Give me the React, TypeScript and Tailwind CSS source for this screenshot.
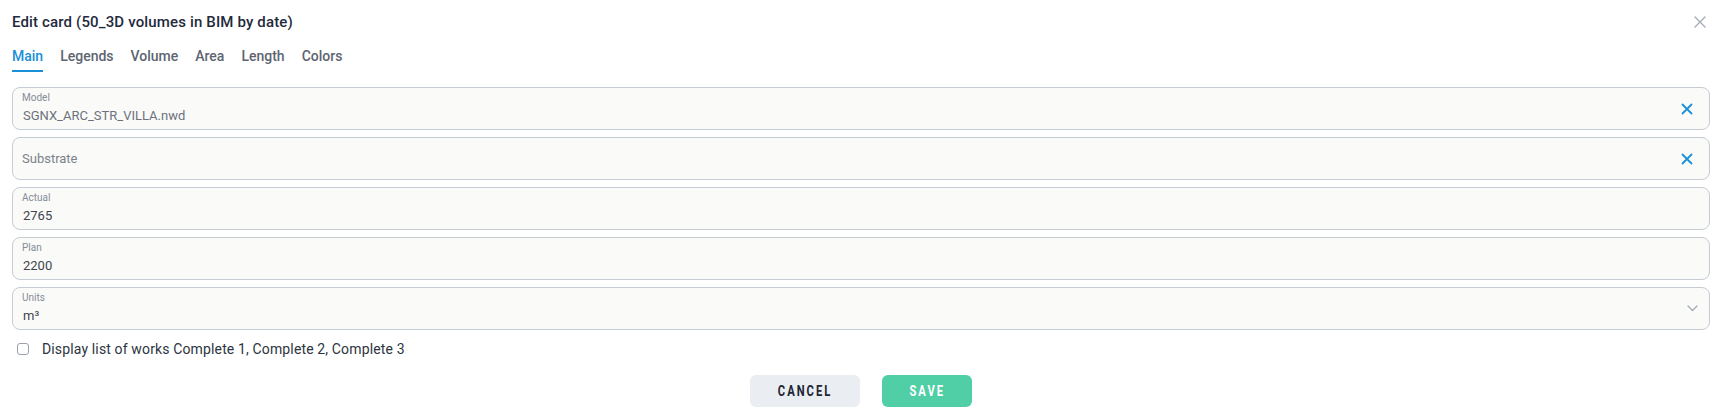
import React from 'react';

const tabs = ['Main', 'Legends', 'Volume', 'Area', 'Length', 'Colors'];

const ClearIcon: React.FC = () => (
  <svg width="12" height="12" viewBox="0 0 12 12" fill="none">
    <path d="M1.5 1.5L10.5 10.5M10.5 1.5L1.5 10.5" stroke="#1b8fd8" strokeWidth="1.8" strokeLinecap="round" />
  </svg>
);

interface FieldProps {
  label?: string;
  value?: string;
  placeholder?: string;
  valueClass?: string;
  right?: React.ReactNode;
}

const Field: React.FC<FieldProps> = ({ label, value, placeholder, valueClass, right }) => (
  <div className="flex h-[43px] items-center rounded-lg border border-[#c5ccd4] bg-[#fafaf9] pl-[9px]">
    <div className="flex min-w-0 flex-1 flex-col justify-center">
      {label ? (
        <>
          <span className="text-[10px] leading-[12px] text-[#858c96]">{label}</span>
          <span className={`mt-[3px] pl-[1px] text-[13px] leading-[18px] ${valueClass ?? 'text-[#3f454e]'}`}>{value}</span>
        </>
      ) : (
        <span className="text-[13px] leading-[18px] text-[#7c828c]">{placeholder}</span>
      )}
    </div>
    {right}
  </div>
);

export default function App() {
  return (
    <div className="h-[420px] w-full bg-white px-3 pt-[11px] font-['Roboto',sans-serif]">
      {/* header */}
      <div className="flex items-center justify-between">
        <h2 className="text-[15px] font-medium leading-[22px] tracking-[0.01em] text-[#1f2b3d]">
          Edit card (50_3D volumes in BIM by date)
        </h2>
        <svg className="mr-[4px]" width="12" height="12" viewBox="0 0 12 12" fill="none">
          <path d="M1 1L11 11M11 1L1 11" stroke="#a5adb8" strokeWidth="1.4" strokeLinecap="round" />
        </svg>
      </div>

      {/* tabs */}
      <div className="mt-[13px] flex gap-[17px]">
        {tabs.map((t, i) => (
          <span
            key={t}
            className={`border-b-2 pb-[4px] text-[14px] font-medium leading-[20px] ${
              i === 0 ? 'border-[#1b8fd8] text-[#1b8fd8]' : 'border-transparent text-[#5d6570]'
            }`}
          >
            {t}
          </span>
        ))}
      </div>

      {/* fields */}
      <div className="mt-[15px] flex flex-col gap-[7px]">
        <Field
          label="Model"
          value="SGNX_ARC_STR_VILLA.nwd"
          valueClass="text-[#6c727c]"
          right={<div className="pr-[16px]"><ClearIcon /></div>}
        />
        <Field placeholder="Substrate" right={<div className="pr-[16px]"><ClearIcon /></div>} />
        <Field label="Actual" value="2765" />
        <Field label="Plan" value="2200" />
        <Field
          label="Units"
          value="m³"
          right={
            <svg className="mr-[11px]" width="11" height="7" viewBox="0 0 11 7" fill="none">
              <path d="M1 1L5.5 5.5L10 1" stroke="#a3aab4" strokeWidth="1.3" strokeLinecap="round" strokeLinejoin="round" />
            </svg>
          }
        />
      </div>

      {/* checkbox */}
      <label className="mt-[11px] flex items-center pl-[5px]">
        <span className="h-[12px] w-[12px] rounded-[3px] border border-[#9aa2ad] bg-white" />
        <span className="ml-[13px] text-[14px] leading-[16px] tracking-[0.01em] text-[#2d3440]">
          Display list of works Complete 1, Complete 2, Complete 3
        </span>
      </label>

      {/* actions */}
      <div className="mt-[18px] flex justify-center gap-[22px]">
        <button className="flex h-[32px] w-[110px] items-center justify-center rounded-md bg-[#eaedf1]">
          <span className="inline-block scale-x-[0.8] text-[14px] font-bold tracking-[0.18em] text-[#1c2533]">
            CANCEL
          </span>
        </button>
        <button className="flex h-[32px] w-[90px] items-center justify-center rounded-md bg-[#50cea6]">
          <span className="inline-block scale-x-[0.8] text-[14px] font-bold tracking-[0.18em] text-white">
            SAVE
          </span>
        </button>
      </div>
    </div>
  );
}
